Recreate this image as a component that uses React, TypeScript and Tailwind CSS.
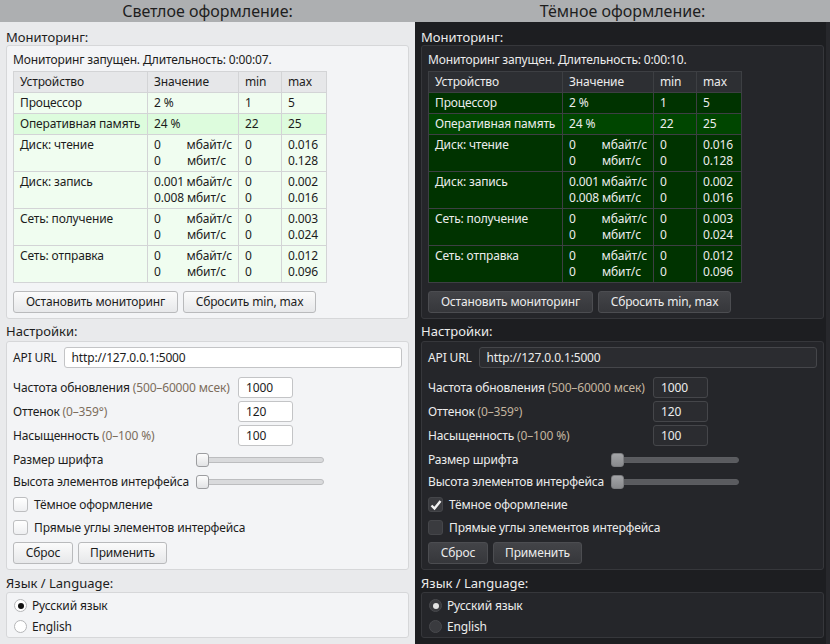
import React from 'react'

type Theme = {
  panel: string
  box: string
  th: string
  td: string
  tdHi: string
  btn: string
  input: string
  hint: string
  track: string
  thumb: string
  check: string
  radio: string
  dot: string
  edge: string
  pad: string
}

const light: Theme = {
  panel: 'bg-[#e9eaec] text-[#1c1c1c]',
  box: 'border-[#d6d7d9] bg-[#f3f4f6]',
  th: 'border-[#d3d4d6] bg-[#e6e7e9]',
  td: 'border-[#d3d4d6] bg-[#f0fdf0]',
  tdHi: 'border-[#d3d4d6] bg-[#ddfcdd]',
  btn: 'border-[#b9babc] bg-linear-to-b from-[#fbfbfb] to-[#e7e8ea] text-[#1c1c1c]',
  input: 'border-[#c3c4c6] bg-white',
  hint: 'text-[#7c6d5c]',
  track: 'border-[#bcbdbf] bg-[#d9dadc]',
  thumb: 'border-[#9c9da0] bg-linear-to-b from-[#fdfdfd] to-[#e2e3e5]',
  check: 'border-[#bdbec0] bg-linear-to-b from-[#ffffff] to-[#eeeff1]',
  radio: 'border-[#b5b6b8] bg-white',
  dot: 'bg-[#111111]',
  edge: 'w-0',
  pad: 'pl-[6px] pr-[6px]',
}

const dark: Theme = {
  panel: 'bg-[#1d1e21] text-[#ececec]',
  box: 'border-[#36373b] bg-[#25262a]',
  th: 'border-[#3d3f43] bg-[#2d2f33]',
  td: 'border-[#3d3f43] bg-[#003300]',
  tdHi: 'border-[#3d3f43] bg-[#004600]',
  btn: 'border-[#4c4d51] bg-linear-to-b from-[#434448] to-[#36373b] text-[#ececec]',
  input: 'border-[#45464a] bg-[#2b2c30]',
  hint: 'text-[#c4b59f]',
  track: 'border-[#5c5d61] bg-[#5a5b5f]',
  thumb: 'border-[#7c7d80] bg-linear-to-b from-[#a3a4a7] to-[#898a8d]',
  check: 'border-[#45464a] bg-[#3a3b3f]',
  radio: 'border-[#48494d] bg-[#3a3b3f]',
  dot: 'bg-[#e4e4e4]',
  edge: 'w-[4px] bg-[#27282c]',
  pad: 'pl-[6px] pr-[2px]',
}

const rows = [
  { name: 'Процессор', vals: [['2 %', '']], min: ['1'], max: ['5'] },
  { name: 'Оперативная память', vals: [['24 %', '']], min: ['22'], max: ['25'], hi: true },
  { name: 'Диск: чтение', vals: [['0', 'мбайт/с'], ['0', 'мбит/с']], min: ['0', '0'], max: ['0.016', '0.128'] },
  { name: 'Диск: запись', vals: [['0.001', 'мбайт/с'], ['0.008', 'мбит/с']], min: ['0', '0'], max: ['0.002', '0.016'] },
  { name: 'Сеть: получение', vals: [['0', 'мбайт/с'], ['0', 'мбит/с']], min: ['0', '0'], max: ['0.003', '0.024'] },
  { name: 'Сеть: отправка', vals: [['0', 'мбайт/с'], ['0', 'мбит/с']], min: ['0', '0'], max: ['0.012', '0.096'] },
]

function Button({ t, w, children }: { t: Theme; w: string; children: React.ReactNode }) {
  return (
    <div className={`flex h-[22px] items-center justify-center rounded-[3px] border ${w} ${t.btn}`}>
      {children}
    </div>
  )
}

function Slider({ t, label }: { t: Theme; label: string }) {
  return (
    <div className="flex h-[22px] items-center">
      <span className="w-[183px] whitespace-nowrap">{label}</span>
      <div className="relative h-[14px] w-[128px]">
        <div className={`absolute top-[4px] left-0 h-[6px] w-[128px] rounded-full border ${t.track}`} />
        <div className={`absolute top-0 left-0 h-[14px] w-[13px] rounded-[3px] border ${t.thumb}`} />
      </div>
    </div>
  )
}

function Checkbox({ t, label, checked }: { t: Theme; label: string; checked?: boolean }) {
  return (
    <div className="flex h-[23px] items-center gap-[6px]">
      <div className={`flex h-[15px] w-[15px] items-center justify-center rounded-[3px] border ${t.check}`}>
        {checked && (
          <svg width="12" height="12" viewBox="0 0 12 12">
            <path d="M1.5 6.5 L4.5 9.5 L10.5 2" fill="none" stroke="#f2f2f2" strokeWidth="2.4" />
          </svg>
        )}
      </div>
      <span>{label}</span>
    </div>
  )
}

function Radio({ t, label, checked }: { t: Theme; label: string; checked?: boolean }) {
  return (
    <div className="flex h-[21px] items-center gap-[5px] pl-[1px]">
      <div className={`flex h-[13px] w-[13px] items-center justify-center rounded-full border ${t.radio}`}>
        {checked && <div className={`h-[6px] w-[6px] rounded-full ${t.dot}`} />}
      </div>
      <span>{label}</span>
    </div>
  )
}

function Panel({ t, title, duration, darkChecked }: { t: Theme; title: string; duration: string; darkChecked?: boolean }) {
  const cell = 'border px-[6px] py-[2px] align-top font-normal'
  const group = 'text-[13px] leading-[16px] tracking-normal'
  return (
    <div className={`flex h-[644px] w-[415px] flex-col ${t.panel}`}>
      <div className="flex h-[22px] items-center justify-center bg-[#adafb1] text-[16px] tracking-normal text-[#1e1e1e]">
        {title}
      </div>
      <div className="flex flex-1">
        <div className={`flex flex-1 flex-col ${t.pad}`}>
          <div className={`mt-[7px] ${group}`}>Мониторинг:</div>
          <div className={`rounded-[3px] border px-[6px] pt-[6px] pb-[5px] ${t.box}`}>
            <div className="leading-[16px]">Мониторинг запущен. Длительность: {duration}.</div>
            <table className="mt-[3px] w-[313px] table-fixed border-collapse text-left leading-[16px]">
              <colgroup>
                <col className="w-[134px]" />
                <col className="w-[91px]" />
                <col className="w-[43px]" />
                <col className="w-[45px]" />
              </colgroup>
              <thead>
                <tr>
                  <th className={`${cell} ${t.th}`}>Устройство</th>
                  <th className={`${cell} ${t.th}`}>Значение</th>
                  <th className={`${cell} ${t.th}`}>min</th>
                  <th className={`${cell} ${t.th}`}>max</th>
                </tr>
              </thead>
              <tbody>
                {rows.map((r) => {
                  const bg = r.hi ? t.tdHi : t.td
                  return (
                    <tr key={r.name}>
                      <td className={`${cell} ${bg} whitespace-nowrap`}>{r.name}</td>
                      <td className={`${cell} ${bg} whitespace-nowrap`}>
                        {r.vals.map(([v, u], i) => (
                          <div key={i} className="flex">
                            <span className="w-[33px]">{v}</span>
                            <span>{u}</span>
                          </div>
                        ))}
                      </td>
                      <td className={`${cell} ${bg}`}>
                        {r.min.map((v, i) => (
                          <div key={i}>{v}</div>
                        ))}
                      </td>
                      <td className={`${cell} ${bg}`}>
                        {r.max.map((v, i) => (
                          <div key={i}>{v}</div>
                        ))}
                      </td>
                    </tr>
                  )
                })}
              </tbody>
            </table>
            <div className="mt-[8px] flex gap-[5px]">
              <Button t={t} w="w-[165px]">Остановить мониторинг</Button>
              <Button t={t} w="w-[133px]">Сбросить min, max</Button>
            </div>
          </div>

          <div className={`mt-[4px] mb-[2px] ${group}`}>Настройки:</div>
          <div className={`rounded-[3px] border px-[6px] pt-[5px] pb-[5px] ${t.box}`}>
            <div className="flex h-[21px] items-center gap-[7px]">
              <span>API URL</span>
              <div className={`flex h-[21px] flex-1 items-center rounded-[3px] border pl-[7px] ${t.input}`}>
                http://127.0.0.1:5000
              </div>
            </div>
            <div className="mt-[9px] grid grid-cols-[225px_55px] gap-y-[3px]">
              {[
                ['Частота обновления', '(500–60000 мсек)', '1000'],
                ['Оттенок', '(0–359°)', '120'],
                ['Насыщенность', '(0–100 %)', '100'],
              ].map(([l, h, v]) => (
                <React.Fragment key={l}>
                  <div className="flex h-[21px] items-center whitespace-nowrap">
                    {l}&nbsp;<span className={t.hint}>{h}</span>
                  </div>
                  <div className={`flex h-[21px] items-center rounded-[3px] border pl-[7px] ${t.input}`}>{v}</div>
                </React.Fragment>
              ))}
            </div>
            <div className="mt-[3px]">
              <Slider t={t} label="Размер шрифта" />
              <Slider t={t} label="Высота элементов интерфейса" />
              <Checkbox t={t} label="Тёмное оформление" checked={darkChecked} />
              <Checkbox t={t} label="Прямые углы элементов интерфейса" />
            </div>
            <div className="mt-[3px] flex gap-[5px]">
              <Button t={t} w="w-[60px]">Сброс</Button>
              <Button t={t} w="w-[89px]">Применить</Button>
            </div>
          </div>

          <div className={`mt-[5px] mb-[1px] ${group}`}>Язык / Language:</div>
          <div className={`rounded-[3px] border px-[6px] pt-[2px] ${t.box}`}>
            <Radio t={t} label="Русский язык" checked />
            <Radio t={t} label="English" />
          </div>
        </div>
        <div className={t.edge} />
      </div>
    </div>
  )
}

export default function App() {
  return (
    <div className="flex h-[644px] w-[830px] overflow-hidden font-['Noto_Sans',sans-serif] text-[12px] leading-[16px] tracking-[-0.15px]">
      <Panel t={light} title="Светлое оформление:" duration="0:00:07" />
      <Panel t={dark} title="Тёмное оформление:" duration="0:00:10" darkChecked />
    </div>
  )
}
